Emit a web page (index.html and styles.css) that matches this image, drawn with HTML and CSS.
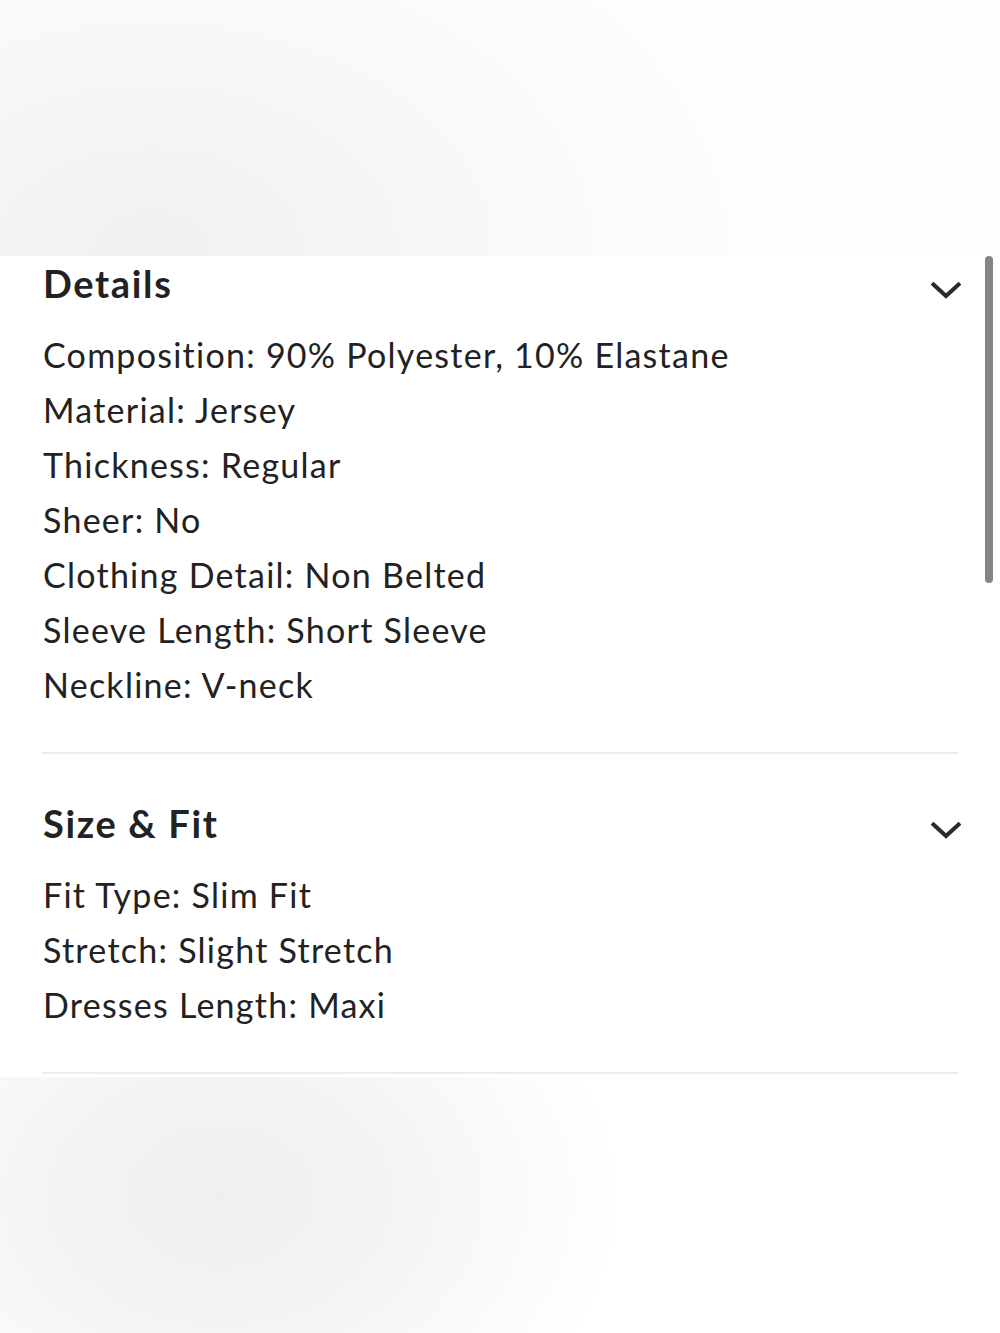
FILE: index.html
```html
<!DOCTYPE html>
<html lang="en">
<head>
<meta charset="utf-8">
<title>Product details</title>
<link rel="stylesheet" href="styles.css">
</head>
<body>
<div class="band band-top"></div>
<main class="panel">
  <section class="section">
    <div class="section-head">
      <h2 class="section-title">Details</h2>
      <svg class="chevron" viewBox="0 0 30 18" width="30" height="18" aria-hidden="true"><path d="M2.5 3.5 L15 15 L27.5 3.5" fill="none" stroke="#2b2b2b" stroke-width="4" stroke-linecap="square" stroke-linejoin="miter"/></svg>
    </div>
    <ul class="attrs">
      <li>Composition: 90% Polyester, 10% Elastane</li>
      <li>Material: Jersey</li>
      <li>Thickness: Regular</li>
      <li>Sheer: No</li>
      <li>Clothing Detail: Non Belted</li>
      <li>Sleeve Length: Short Sleeve</li>
      <li>Neckline: V-neck</li>
    </ul>
  </section>
  <section class="section">
    <div class="section-head">
      <h2 class="section-title">Size &amp; Fit</h2>
      <svg class="chevron" viewBox="0 0 30 18" width="30" height="18" aria-hidden="true"><path d="M2.5 3.5 L15 15 L27.5 3.5" fill="none" stroke="#2b2b2b" stroke-width="4" stroke-linecap="square" stroke-linejoin="miter"/></svg>
    </div>
    <ul class="attrs">
      <li>Fit Type: Slim Fit</li>
      <li>Stretch: Slight Stretch</li>
      <li>Dresses Length: Maxi</li>
    </ul>
  </section>
  <div class="scrollbar"></div>
</main>
<div class="band band-bottom"></div>
</body>
</html>
```

FILE: styles.css
```css
html, body {
  margin: 0;
  padding: 0;
}
body {
  width: 1000px;
  height: 1333px;
  overflow: hidden;
  background: #ffffff;
  font-family: Lato, "Open Sans", "Liberation Sans", sans-serif;
  color: #222222;
}
.band {
  width: 100%;
}
.band-top {
  height: 256px;
  background:
    radial-gradient(ellipse 600px 400px at 150px 250px, #f0f0f0 0%, #f5f5f5 35%, #fafafa 70%, #fdfdfd 100%);
}
.band-bottom {
  height: 257px;
  background:
    radial-gradient(ellipse 400px 300px at 220px 120px, #efefef 0%, #f3f3f3 40%, #fbfbfb 80%, #ffffff 100%);
}
.panel {
  position: relative;
  background: #ffffff;
  padding: 5px 42px 3px 42px;
}
.section {
  border-bottom: 2px solid #ececec;
  padding-bottom: 40px;
}
.section + .section {
  margin-top: 47px;
}
.section-head {
  display: flex;
  justify-content: space-between;
  align-items: flex-start;
}
.section-title {
  margin: 0;
  padding-left: 1px;
  font-size: 38px;
  line-height: 44px;
  font-weight: 700;
  letter-spacing: 1.65px;
  color: #222222;
}
.chevron {
  display: block;
  margin-top: 20px;
  margin-right: -3px;
}
.attrs {
  list-style: none;
  margin: 22px 0 0 0;
  padding: 0 0 0 1px;
}
.attrs li {
  font-size: 34px;
  line-height: 55px;
  font-weight: 400;
  color: #222222;
  letter-spacing: 1.25px;
}
.scrollbar {
  position: absolute;
  top: 0;
  left: 985px;
  width: 8px;
  height: 327px;
  border-radius: 4px;
  background: #858585;
}
```
